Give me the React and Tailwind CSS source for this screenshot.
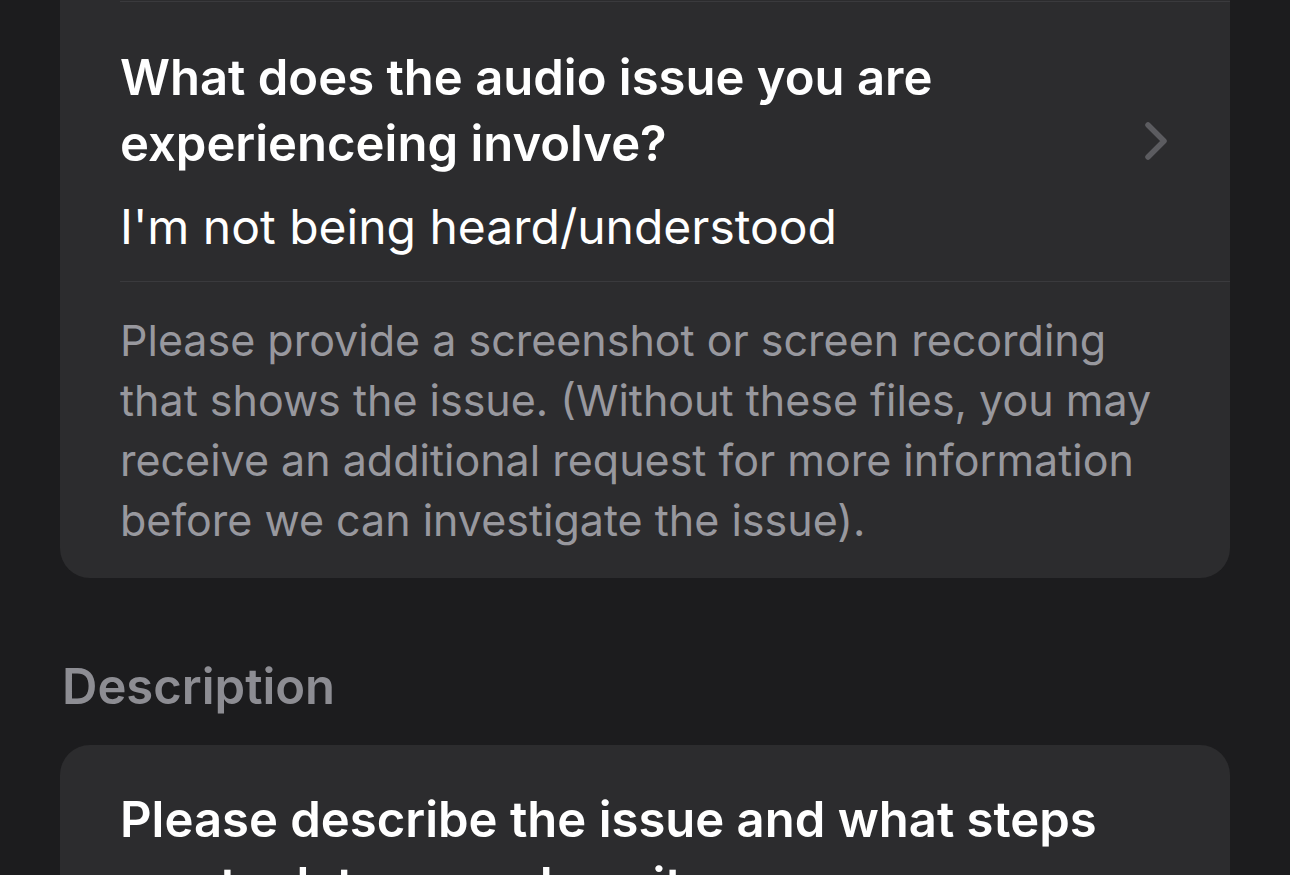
export default function App() {
  const font = { fontFamily: "Inter, 'Noto Sans', sans-serif" };
  return (
    <div className="w-full h-[875px] overflow-hidden bg-[#1c1c1e] px-[60px]" style={font}>
      {/* Card 1 (continues above the viewport) */}
      <div className="bg-[#2c2c2e] rounded-b-[30px]">
        <div className="h-px" />
        <div className="ml-[60px] h-px bg-[#3a3a3d]" />
        <div className="flex items-start pl-[60px] pr-[62px] pt-[43px] pb-[21px]">
          <div className="flex-1">
            <div className="text-[49px] leading-[66px] font-semibold text-white">
              What does the audio issue you are
              <br />
              experienceing involve?
            </div>
            <div className="mt-[17px] text-[48px] leading-[66px] font-normal text-white">
              I'm not being heard/understood
            </div>
          </div>
          <svg width="24" height="40" viewBox="0 0 24 40" className="shrink-0 mt-[76px]">
            <polyline
              points="4,4 20,20 4,36"
              fill="none"
              stroke="#5c5c60"
              strokeWidth="5.5"
              strokeLinecap="round"
              strokeLinejoin="round"
            />
          </svg>
        </div>
        <div className="ml-[60px] h-px bg-[#3a3a3d]" />
        <div className="pl-[60px] pr-[40px] pt-[28px] pb-[28px] text-[43px] leading-[60px] text-[#98989e]">
          Please provide a screenshot or screen recording that shows the issue. (Without these files, you may receive an additional request for more information before we can investigate the issue).
        </div>
      </div>

      {/* Section header */}
      <div className="mt-[81px] pl-[2px] text-[49px] leading-[56px] font-semibold text-[#8d8d93]">
        Description
      </div>

      {/* Card 2 */}
      <div className="mt-[30px] bg-[#2c2c2e] rounded-t-[30px] pl-[60px] pr-[60px] pt-[42px] pb-[40px]">
        <div className="text-[49px] leading-[66px] font-semibold text-white">
          Please describe the issue and what steps
          <br />
          you took to reproduce it.
        </div>
      </div>
    </div>
  );
}
